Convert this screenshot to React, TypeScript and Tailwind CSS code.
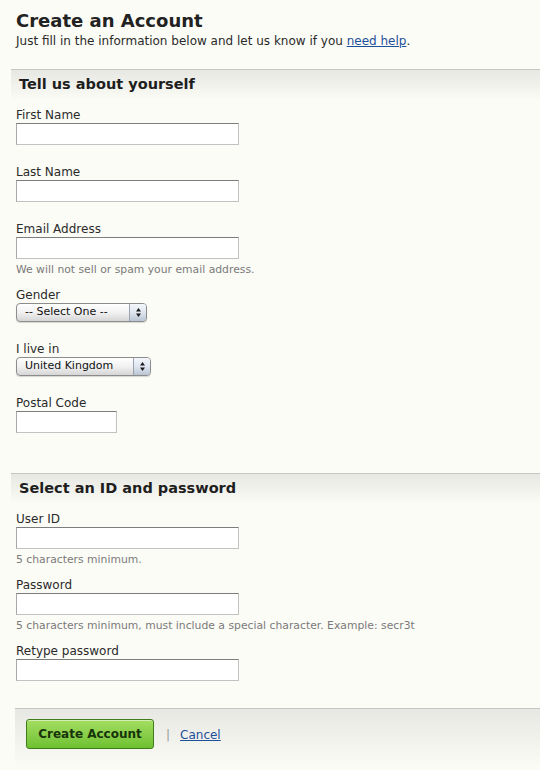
import type { ReactNode } from 'react'

const font = { fontFamily: '"DejaVu Sans", Verdana, sans-serif' }

function Field({ label, children, className = '' }: { label: string; children: ReactNode; className?: string }) {
  return (
    <div className={className}>
      <div className="text-[12px] leading-[15px] text-[#2a2a2a]">{label}</div>
      {children}
    </div>
  )
}

function TextInput({ width = 'w-[223px]', type = 'text' }: { width?: string; type?: string }) {
  return (
    <input
      type={type}
      className={`${width} h-[22px] block bg-white border border-[#c2c2c2] border-t-[#7d7d7d] border-l-[#a8a8a8] outline-none px-1 text-[12px]`}
    />
  )
}

function Hint({ children }: { children: ReactNode }) {
  return <div className="mt-[4px] text-[10.8px] leading-[14px] text-[#7a7a7a]">{children}</div>
}

function FakeSelect({ value, width }: { value: string; width: string }) {
  return (
    <div
      className={`${width} h-[19px] flex items-stretch rounded-[4px] border border-[#8c8c8c] bg-gradient-to-b from-[#ffffff] via-[#f1f1f1] to-[#d6d6d6] shadow-[0_1px_1px_rgba(0,0,0,0.15)] overflow-hidden`}
    >
      <div className="flex-1 flex items-center pl-[8px] text-[11px] text-[#111]">{value}</div>
      <div className="w-[17px] flex items-center justify-center border-l border-[#9aa3b0] bg-gradient-to-b from-[#f4f7fb] via-[#dfe6ef] to-[#b9c5d4]">
        <svg width="7" height="11" viewBox="0 0 7 11">
          <path d="M3.5 1 L6 4.5 H1 Z" fill="#1c1c1c" />
          <path d="M3.5 10 L6 6.5 H1 Z" fill="#1c1c1c" />
        </svg>
      </div>
    </div>
  )
}

function SectionHeader({ title, className = '' }: { title: string; className?: string }) {
  return (
    <div
      className={`ml-[11px] h-[31px] border-t border-[#c6c6c2] bg-gradient-to-b from-[#e7e7e3] to-[#fcfcf6] pl-[8px] pt-[5px] ${className}`}
    >
      <h2 className="text-[14.5px] leading-[18px] font-bold text-[#1e1e1e]">{title}</h2>
    </div>
  )
}

export default function App() {
  return (
    <div className="w-[540px] h-[770px] bg-[#fcfcf6] overflow-hidden" style={font}>
      {/* Page Header */}
      <div className="pl-[16px] pt-[10px]">
        <h1 className="text-[18px] leading-[22px] font-bold text-[#222]">Create an Account</h1>
        <p className="mt-[2px] text-[12px] leading-[15px] text-[#2a2a2a]">
          Just fill in the information below and let us know if you{' '}
          <a href="#" className="text-[#1d4f9a] underline">need help</a>.
        </p>
      </div>

      {/* About yourself */}
      <SectionHeader title="Tell us about yourself" className="mt-[20px]" />
      <div className="pl-[16px]">
        <Field label="First Name" className="mt-[8px]">
          <TextInput />
        </Field>
        <Field label="Last Name" className="mt-[20px]">
          <TextInput />
        </Field>
        <Field label="Email Address" className="mt-[20px]">
          <TextInput type="email" />
          <Hint>We will not sell or spam your email address.</Hint>
        </Field>
        <Field label="Gender" className="mt-[11px]">
          <FakeSelect value="-- Select One --" width="w-[131px]" />
        </Field>
        <Field label="I live in" className="mt-[20px]">
          <FakeSelect value="United Kingdom" width="w-[135px]" />
        </Field>
        <Field label="Postal Code" className="mt-[20px]">
          <TextInput width="w-[101px]" />
        </Field>
      </div>

      {/* ID and password */}
      <SectionHeader title="Select an ID and password" className="mt-[40px]" />
      <div className="pl-[16px]">
        <Field label="User ID" className="mt-[8px]">
          <TextInput />
          <Hint>5 characters minimum.</Hint>
        </Field>
        <Field label="Password" className="mt-[11px]">
          <TextInput type="password" />
          <Hint>5 characters minimum, must include a special character. Example: secr3t</Hint>
        </Field>
        <Field label="Retype password" className="mt-[11px]">
          <TextInput type="password" />
        </Field>
      </div>

      {/* Actions */}
      <div className="mt-[27px] ml-[15px] h-[60px] border-t border-[#c6c6c2] bg-gradient-to-b from-[#e7e7e3] to-[#fcfcf6] pl-[11px] pt-[10px] flex items-start">
        <button className="w-[128px] h-[30px] rounded-[3px] border border-[#3f7d1c] bg-gradient-to-b from-[#a4de62] to-[#6ec030] text-[12px] font-bold text-[#17330a] shadow-[inset_0_1px_0_rgba(255,255,255,0.5)]">
          Create Account
        </button>
        <span className="ml-[12px] mt-[7px] text-[12px] text-[#999]">|</span>
        <a href="#" className="ml-[10px] mt-[7px] text-[12px] text-[#1d4f9a] underline">Cancel</a>
      </div>
    </div>
  )
}
